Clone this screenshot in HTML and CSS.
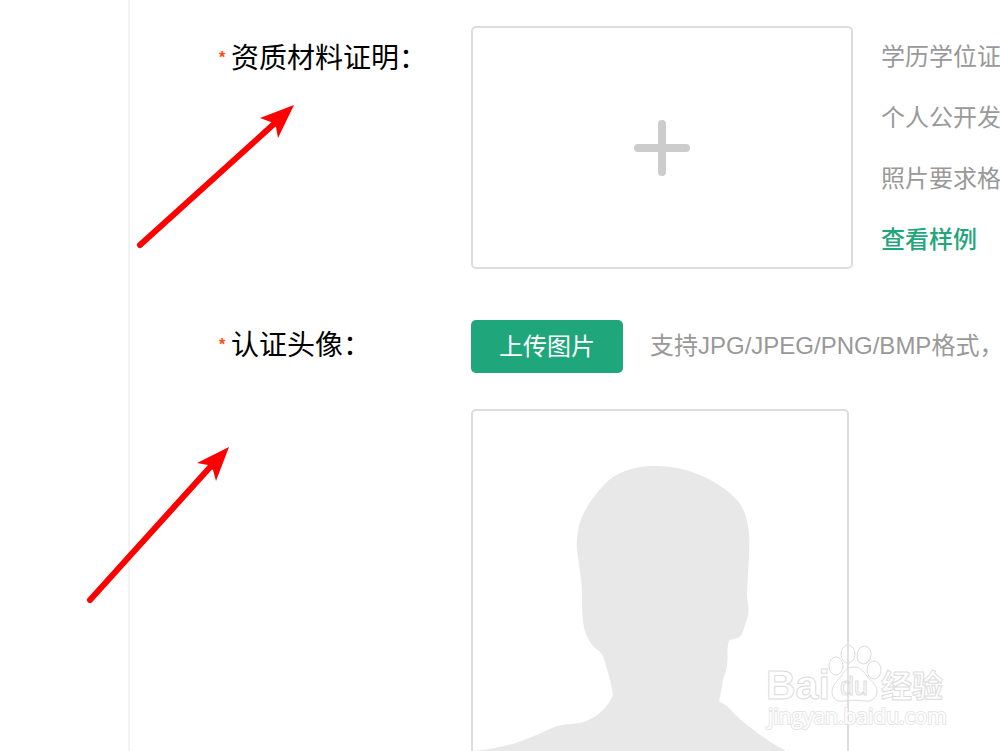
FILE: index.html
```html
<!DOCTYPE html>
<html lang="zh-CN">
<head>
    <meta charset="UTF-8">
    <meta name="viewport" content="width=device-width, initial-scale=1.0">
    <title>资质认证</title>
    <link rel="stylesheet" href="styles.css">
</head>
<body>
    <div class="page">
        <aside class="sidebar"></aside>

        <main class="content">
            <form class="form">
                <div class="form-row">
                    <label class="form-label" for="material"><span class="required">*</span>资质材料证明：</label>
                    <div class="form-field">
                        <button type="button" class="upload-box" id="material">
                            <svg width="56" height="56" viewBox="0 0 56 56" fill="none" stroke="#ccc" stroke-width="8" stroke-linecap="round">
                                <path d="M28 4v48M4 28h48"/>
                            </svg>
                        </button>
                        <div class="tips">
                            <p>学历学位证</p>
                            <p>个人公开发</p>
                            <p>照片要求格</p>
                            <p><a href="#" class="example-link">查看样例</a></p>
                        </div>
                    </div>
                </div>

                <div class="form-row">
                    <label class="form-label" for="avatar"><span class="required">*</span>认证头像：</label>
                    <div class="form-column">
                        <div class="upload-line">
                            <button type="button" class="upload-btn" id="avatar">上传图片</button>
                            <span class="upload-tip">支持JPG/JPEG/PNG/BMP格式，</span>
                        </div>
                        <div class="avatar-box">
                            <svg class="avatar" viewBox="0 0 374 374" fill="#e8e8e8">
                                <path d="M182 55C160 55 141 62 131 74C120 86 108 101 105 120C101 138 108 155 109 180C109 205 109 218 117 231C122 239 127 239 130 245C135 260 138 272 140 284C136 294 127 305 111 311C99 314 90 312 79 317C50 331 28 338 0 340V374H374V364C350 352 330 348 313 340C293 329 270 313 254 295L246 290C249 280 248 272 253 260C256 247 253 240 256 229C264 228 268 227 270 220L275 205C277 194 273 188 274 180C275 162 277 140 276 122C274 103 269 92 257 82C236 65 210 55 182 55Z"/>
                            </svg>
                        </div>
                    </div>
                </div>
            </form>
        </main>

        <!-- 标注箭头 -->
        <svg class="arrows" width="300" height="610" viewBox="0 0 300 610" fill="#f00" stroke="#f00">
            <path d="M140 245L275 123" stroke-width="6" stroke-linecap="round"/>
            <path d="M294 105L260 118L271 122L276 127L278 138Z" stroke="none"/>
            <path d="M90 600L212 465" stroke-width="6" stroke-linecap="round"/>
            <path d="M229 447L197 463L208 465L213 470L216 481Z" stroke="none"/>
        </svg>

        <!-- 水印 -->
        <svg class="watermark" width="200" height="100" viewBox="0 0 200 100">
            <text class="mark-brand" x="6" y="59">Bai</text>
            <g class="mark-paw">
                <ellipse cx="76" cy="26" rx="7" ry="9"/>
                <ellipse cx="88" cy="14" rx="7" ry="9"/>
                <ellipse cx="104" cy="15" rx="7" ry="9" transform="rotate(10 104 15)"/>
                <ellipse cx="114" cy="30" rx="7" ry="9"/>
                <path d="M94 27C88 27 85 30 82 35C78 41 72 44 72 52C72 59 77 62 83 61C91 60 98 60 105 61C112 62 117 58 117 51C117 44 111 42 107 36C103 31 100 27 94 27Z"/>
            </g>
            <text class="mark-du" x="80" y="55">du</text>
            <text class="mark-cn" x="121" y="57">经验</text>
            <text class="mark-url" x="8" y="84">jingyan.baidu.com</text>
        </svg>
    </div>
</body>
</html>
```
FILE: styles.css
```css
* {
    box-sizing: border-box;
}
body {
    margin: 0;
    background: #fff;
    color: #000;
    font-family: "Liberation Sans", "Noto Sans CJK SC", sans-serif;
    font-size: 24px;
}
p {
    margin: 0;
}
button {
    padding: 0;
    font-family: inherit;
    cursor: pointer;
}
.page {
    position: relative;
    display: flex;
    height: 100vh;
    overflow: hidden;
}
.sidebar {
    flex: 0 0 130px;
    border-right: 2px solid #f2f2f2;
}
.content {
    flex: 1;
    min-width: 0;
    padding: 26px 0 0 89px;
}
.form {
    display: flex;
    flex-direction: column;
    gap: 50px;
}
.form-row {
    display: flex;
    align-items: flex-start;
}
.form-label {
    display: flex;
    flex: 0 0 252px;
    align-items: center;
    height: 60px;
    font-size: 28px;
    white-space: nowrap;
}
.form-row + .form-row .form-label {
    height: 46px;
}
.required {
    width: 12px;
    padding-top: 4px;
    color: #ff4a0c;
    font-size: 16px;
    font-weight: bold;
    line-height: 16px;
}
.form-field {
    display: flex;
    gap: 28px;
}
.upload-box {
    display: flex;
    flex: none;
    align-items: center;
    justify-content: center;
    width: 382px;
    height: 243px;
    border: 2px solid #ddd;
    border-radius: 5px;
    background: #fff;
}
.tips {
    color: #999;
    line-height: 61px;
    white-space: nowrap;
}
.example-link {
    color: #1fa67a;
    font-weight: 500;
    text-decoration: none;
}
.form-column {
    display: flex;
    flex-direction: column;
    gap: 36px;
}
.upload-line {
    display: flex;
    align-items: center;
    gap: 27px;
    line-height: 48px;
}
.upload-btn {
    width: 152px;
    height: 53px;
    padding-bottom: 4px;
    border: 0;
    border-radius: 5px;
    background: #1fa67a;
    color: #fff;
    font-size: 24px;
}
.upload-tip {
    padding-bottom: 2px;
    color: #999;
    white-space: nowrap;
}
.avatar-box {
    width: 378px;
    border: 2px solid #ddd;
    border-radius: 5px;
}
.avatar {
    display: block;
    width: 100%;
}
.arrows {
    position: absolute;
    top: 0;
    left: 0;
    pointer-events: none;
}
.watermark {
    position: absolute;
    right: 40px;
    bottom: 11px;
    fill: #fff;
    fill-opacity: 0.2;
    stroke: #dcdcdc;
    stroke-width: 1;
    pointer-events: none;
}
.mark-brand {
    font: bold 41px "Liberation Sans", sans-serif;
}
.mark-du {
    font: 25px "Liberation Sans", sans-serif;
}
.mark-cn {
    font: bold 31px "Noto Sans CJK SC", sans-serif;
}
.mark-url {
    fill-opacity: 1;
    stroke: #e6e6e6;
    stroke-width: 2;
    paint-order: stroke;
    font: 21px "Open Sans", sans-serif;
}
```
